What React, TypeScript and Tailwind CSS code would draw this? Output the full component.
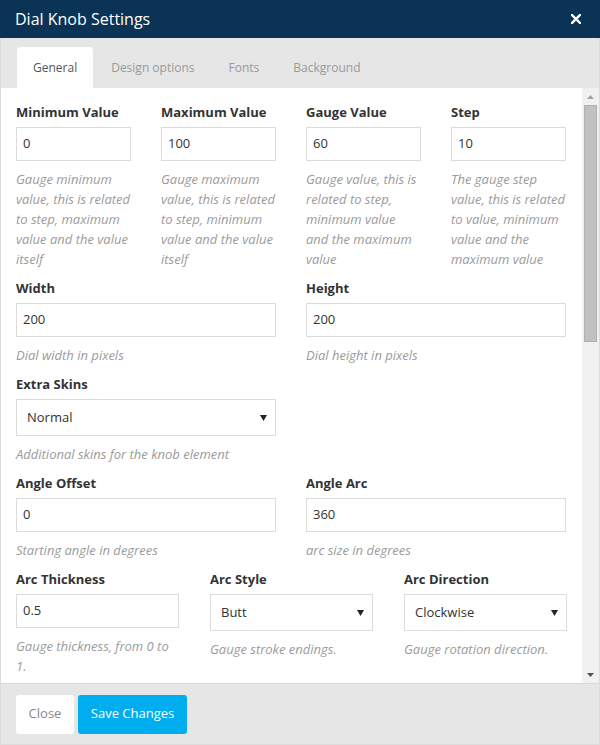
import React from "react";

function Label({ children }: { children: React.ReactNode }) {
  return <div className="h-[20px] text-[13px] leading-[20px] font-bold text-[#333]">{children}</div>;
}

function TextBox({ value }: { value: string }) {
  return (
    <div className="mt-[5px] h-[34px] border border-[#dcdcdc] bg-white pl-[6px] flex items-center text-[13px] text-[#333]">
      {value}
    </div>
  );
}

function SelectBox({ value, tall = true }: { value: string; tall?: boolean }) {
  return (
    <div
      className={
        "mt-[5px] border border-[#dcdcdc] bg-white pl-[10px] pr-[8px] flex items-center justify-between text-[13px] text-[#333] " +
        (tall ? "h-[37px]" : "h-[37px]")
      }
    >
      <span>{value}</span>
      <svg width="7" height="7" viewBox="0 0 7 7">
        <polygon points="0,1 7,1 3.5,7" fill="#222" />
      </svg>
    </div>
  );
}

function Help({ lines }: { lines: string[] }) {
  return (
    <div className="mt-[8px] mb-[9px] text-[13px] leading-[20px] italic text-[#9b9b9b]">
      {lines.map((l, i) => (
        <div key={i} className="whitespace-nowrap">
          {l}
        </div>
      ))}
    </div>
  );
}

export default function App() {
  return (
    <div className="w-[600px] h-[745px] flex flex-col font-['Open_Sans','Liberation_Sans',sans-serif] bg-white">
      {/* Header */}
      <div className="h-[38px] bg-[#0a3356] flex items-center justify-between pl-[15px] pr-[19px] shrink-0">
        <div className="text-[16px] text-white leading-none">Dial Knob Settings</div>
        <svg width="10" height="10" viewBox="0 0 10 10">
          <path d="M1 1 L9 9 M9 1 L1 9" stroke="#fff" strokeWidth="2.4" strokeLinecap="square" />
        </svg>
      </div>

      {/* Tabs */}
      <div className="h-[50px] bg-[#e6e6e6] border-x border-[#dcdcdc] flex items-end pl-[16px] gap-[2px] shrink-0">
        <div className="h-[41px] px-[16px] bg-white rounded-t-[4px] flex items-center text-[12px] text-[#555]">General</div>
        <div className="h-[41px] px-[16px] flex items-center text-[12px] text-[#999]">Design options</div>
        <div className="h-[41px] px-[16px] flex items-center text-[12px] text-[#999]">Fonts</div>
        <div className="h-[41px] px-[16px] flex items-center text-[12px] text-[#999]">Background</div>
      </div>

      {/* Body */}
      <div className="flex-1 flex border-x border-[#dcdcdc] overflow-hidden min-h-0">
        <div className="flex-1 pl-[15px] pt-[14px] overflow-hidden">
          <div className="grid grid-cols-[115px_115px_115px_115px] gap-x-[30px]">
            <div>
              <Label>Minimum Value</Label>
              <TextBox value="0" />
              <Help lines={["Gauge minimum", "value, this is related", "to step, maximum", "value and the value", "itself"]} />
            </div>
            <div>
              <Label>Maximum Value</Label>
              <TextBox value="100" />
              <Help lines={["Gauge maximum", "value, this is related", "to step, minimum", "value and the value", "itself"]} />
            </div>
            <div>
              <Label>Gauge Value</Label>
              <TextBox value="60" />
              <Help lines={["Gauge value, this is", "related to step,", "minimum value", "and the maximum", "value"]} />
            </div>
            <div>
              <Label>Step</Label>
              <TextBox value="10" />
              <Help lines={["The gauge step", "value, this is related", "to value, minimum", "value and the", "maximum value"]} />
            </div>
          </div>

          <div className="grid grid-cols-[260px_260px] gap-x-[30px]">
            <div>
              <Label>Width</Label>
              <TextBox value="200" />
              <Help lines={["Dial width in pixels"]} />
            </div>
            <div>
              <Label>Height</Label>
              <TextBox value="200" />
              <Help lines={["Dial height in pixels"]} />
            </div>
          </div>

          <div className="w-[260px]">
            <Label>Extra Skins</Label>
            <SelectBox value="Normal" />
            <Help lines={["Additional skins for the knob element"]} />
          </div>

          <div className="grid grid-cols-[260px_260px] gap-x-[30px]">
            <div>
              <Label>Angle Offset</Label>
              <TextBox value="0" />
              <Help lines={["Starting angle in degrees"]} />
            </div>
            <div>
              <Label>Angle Arc</Label>
              <TextBox value="360" />
              <Help lines={["arc size in degrees"]} />
            </div>
          </div>

          <div className="grid grid-cols-[163px_163px_163px] gap-x-[31px]">
            <div>
              <Label>Arc Thickness</Label>
              <TextBox value="0.5" />
              <Help lines={["Gauge thickness, from 0 to", "1."]} />
            </div>
            <div>
              <Label>Arc Style</Label>
              <SelectBox value="Butt" tall={false} />
              <Help lines={["Gauge stroke endings."]} />
            </div>
            <div>
              <Label>Arc Direction</Label>
              <SelectBox value="Clockwise" tall={false} />
              <Help lines={["Gauge rotation direction."]} />
            </div>
          </div>
        </div>

        {/* Scrollbar */}
        <div className="w-[17px] bg-[#f1f1f1] flex flex-col shrink-0">
          <div className="h-[17px] flex items-center justify-center">
            <svg width="7" height="4" viewBox="0 0 7 4">
              <polygon points="3.5,0 7,4 0,4" fill="#a3a3a3" />
            </svg>
          </div>
          <div className="ml-[2px] mr-[2px] h-[237px] bg-[#c1c1c1] border border-[#b0b0b0]" />
          <div className="flex-1" />
          <div className="h-[17px] flex items-center justify-center">
            <svg width="7" height="4" viewBox="0 0 7 4">
              <polygon points="0,0 7,0 3.5,4" fill="#505050" />
            </svg>
          </div>
        </div>
      </div>

      {/* Footer */}
      <div className="h-[62px] bg-[#e6e6e6] border-t border-[#d8d8d8] border-x border-b border-x-[#dcdcdc] border-b-[#dcdcdc] flex items-center pl-[15px] gap-[4px] shrink-0">
        <div className="h-[39px] w-[58px] bg-white rounded-[3px] flex items-center justify-center text-[13px] text-[#888]">
          Close
        </div>
        <div className="h-[39px] w-[109px] bg-[#00aeef] rounded-[3px] flex items-center justify-center text-[13px] text-white">
          Save Changes
        </div>
      </div>
    </div>
  );
}
